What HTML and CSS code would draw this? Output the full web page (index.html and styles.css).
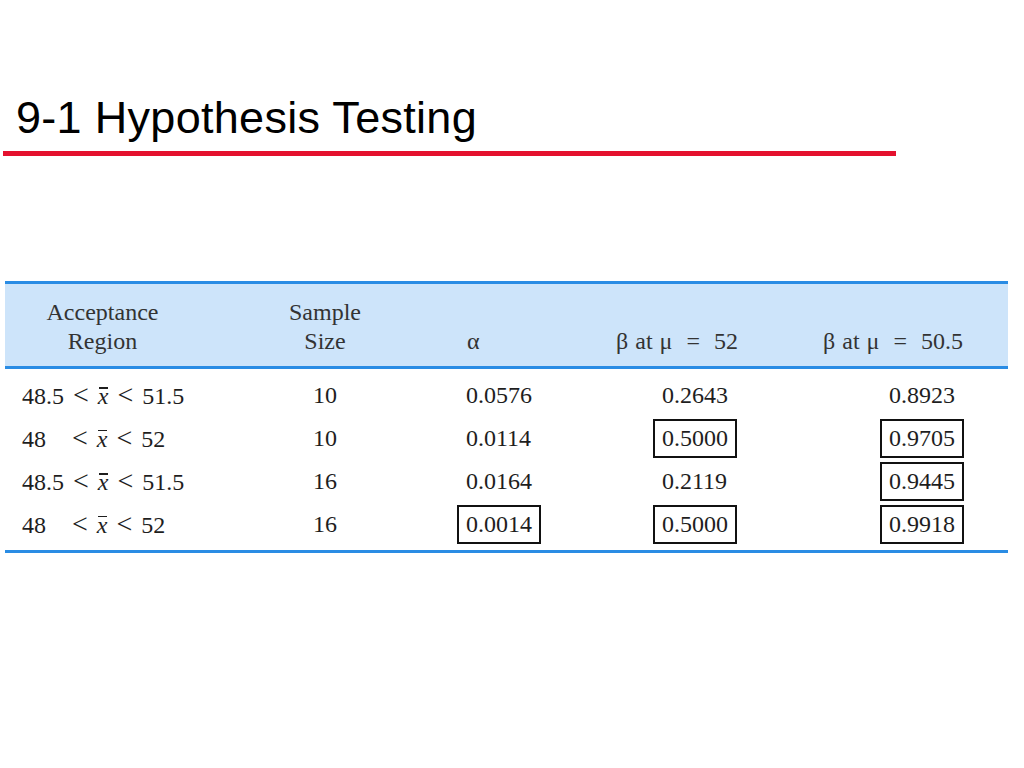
FILE: index.html
```html
<!DOCTYPE html>
<html>
<head>
<meta charset="utf-8">
<title>9-1 Hypothesis Testing</title>
<link rel="stylesheet" href="styles.css">
</head>
<body>
<h1 class="title">9-1 Hypothesis Testing</h1>
<div class="rule"></div>

<div class="table">
  <div class="thead">
    <div class="th c1">Acceptance<br>Region</div>
    <div class="th c2">Sample<br>Size</div>
    <div class="th c3">α</div>
    <div class="th c4">β at μ&nbsp;&nbsp;=&nbsp;&nbsp;52</div>
    <div class="th c5">β at μ&nbsp;&nbsp;=&nbsp;&nbsp;50.5</div>
  </div>
  <div class="tbody">
    <div class="td c1"><span class="region">48.5 <span class="lt">&lt;</span> <span class="xbar thick">x</span> <span class="lt">&lt;</span> 51.5</span></div>
    <div class="td c2">10</div>
    <div class="td c3"><span class="val">0.0576</span></div>
    <div class="td c4"><span class="val">0.2643</span></div>
    <div class="td c5"><span class="val">0.8923</span></div>

    <div class="td c1"><span class="region">48<span class="gap"></span><span class="lt">&lt;</span> <span class="xbar">x</span> <span class="lt">&lt;</span> 52</span></div>
    <div class="td c2">10</div>
    <div class="td c3"><span class="val">0.0114</span></div>
    <div class="td c4"><span class="val boxed">0.5000</span></div>
    <div class="td c5"><span class="val boxed">0.9705</span></div>

    <div class="td c1"><span class="region">48.5 <span class="lt">&lt;</span> <span class="xbar thick">x</span> <span class="lt">&lt;</span> 51.5</span></div>
    <div class="td c2">16</div>
    <div class="td c3"><span class="val">0.0164</span></div>
    <div class="td c4"><span class="val">0.2119</span></div>
    <div class="td c5"><span class="val boxed">0.9445</span></div>

    <div class="td c1"><span class="region">48<span class="gap"></span><span class="lt">&lt;</span> <span class="xbar">x</span> <span class="lt">&lt;</span> 52</span></div>
    <div class="td c2">16</div>
    <div class="td c3"><span class="val boxed">0.0014</span></div>
    <div class="td c4"><span class="val boxed">0.5000</span></div>
    <div class="td c5"><span class="val boxed">0.9918</span></div>
  </div>
</div>
</body>
</html>
```

FILE: styles.css
```css
html, body {
  margin: 0;
  padding: 0;
  background: #ffffff;
}

body {
  width: 1024px;
  height: 768px;
  overflow: hidden;
}

.title {
  margin: 93px 0 0 0;
  padding-left: 16px;
  font-family: "Liberation Sans", Arial, sans-serif;
  font-weight: normal;
  font-size: 45px;
  letter-spacing: 0.3px;
  line-height: 50px;
  color: #000000;
}

.rule {
  margin: 8px 0 0 3px;
  width: 893px;
  height: 5px;
  background: #e4112e;
}

.table {
  margin: 125px 0 0 5px;
  width: 1003px;
  font-family: "Liberation Serif", "Times New Roman", serif;
  font-size: 24px;
}

.thead,
.tbody {
  display: grid;
  grid-template-columns: 250px 140px 205px 180px 228px;
}

.thead {
  background: #cde4fa;
  border-top: 3px solid #2a8ce4;
  border-bottom: 3px solid #2a8ce4;
  height: 82px;
  color: #333333;
}

.th {
  align-self: end;
  line-height: 29px;
  padding-bottom: 10px;
}

.th.c1 { text-align: center; padding-right: 55px; }
.th.c2 { text-align: center; }
.th.c3 { padding-left: 72px; }
.th.c4 { text-align: right; padding-right: 42px; word-spacing: 1px; }
.th.c5 { text-align: right; padding-right: 45px; word-spacing: 1px; }

.tbody {
  padding: 5px 0 4px 0;
  border-bottom: 3px solid #2a8ce4;
  grid-auto-rows: 43px;
  color: #1e1e1e;
}

.td {
  display: flex;
  align-items: center;
  white-space: nowrap;
}

.td.c1 { padding-left: 17px; }
.td.c2 { justify-content: center; }
.td.c3 { padding-left: 62px; }
.td.c4 { padding-left: 53px; }
.td.c5 { padding-left: 100px; }

.region {
  white-space: pre;
  word-spacing: 3px;
  line-height: 28px;
}

.lt {
  font-size: 28px;
  line-height: 0;
}

.val {
  display: inline-block;
  box-sizing: border-box;
  height: 39px;
  line-height: 35px;
  padding: 0 7px;
  border: 2px solid transparent;
}

.val.boxed {
  border-color: #111111;
}

.gap {
  display: inline-block;
  width: 26px;
}

.xbar {
  position: relative;
  font-style: italic;
}

.xbar::before {
  content: "";
  position: absolute;
  left: 1px;
  right: 0;
  top: 4px;
  border-top: 1px solid #1e1e1e;
}

.xbar.thick::before {
  border-top-width: 2px;
}
```
